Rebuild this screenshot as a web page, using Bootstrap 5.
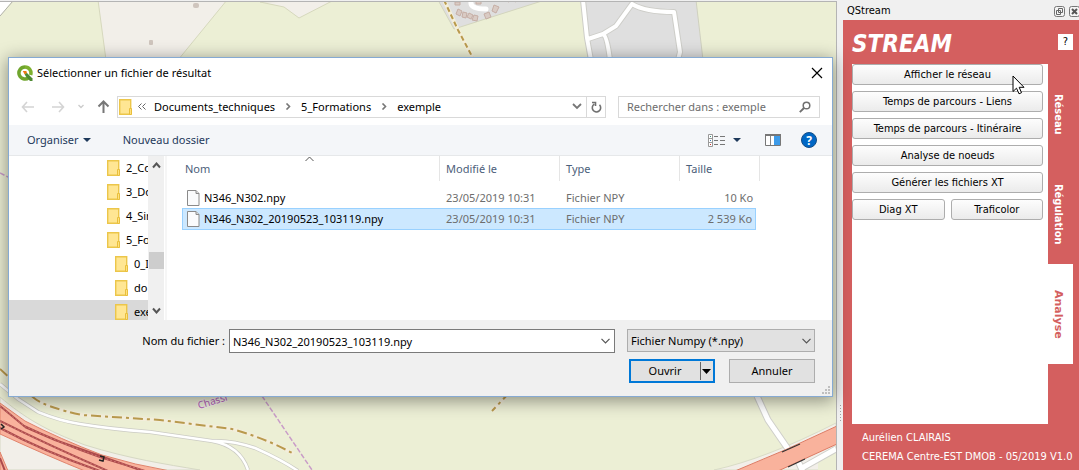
<!DOCTYPE html>
<html lang="fr">
<head>
<meta charset="utf-8">
<meta name="viewport" content="width=device-width, initial-scale=1">
<title>QStream</title>
<link rel="stylesheet" href="https://cdn.jsdelivr.net/npm/bootstrap@5.3.0/dist/css/bootstrap.min.css">
<style>
  body { font: 11px/16px "Noto Sans", "Open Sans", sans-serif; color: #000; background: #f0f0f0; }
  button, input, select { font: inherit; color: inherit; border-radius: 0; }
  svg { display: block; flex: none; }
  .rule { border: 1px solid #d9d9d9; }

  /* Map canvas */
  .map-pane { padding: 55px 3px 72px 8px; border: solid #b4b4b4; border-width: 1px 1px 0 0; margin-top: 1px; }
  .map-art { position: absolute; inset: 0; width: 100%; height: 100%; }
  .splitter { width: 6px; }

  /* File dialog */
  .file-dialog { border: 1px solid #86aad2; box-shadow: 0 3px 16px 1px rgba(0,0,0,.4); z-index: 2; }
  .title-row { height: 30px; padding: 0 9px 0 8px; }
  .nav-row { height: 37px; padding: 0 12px; }
  .step { margin-left: 13px; }
  .path-box { height: 22px; margin-left: 7px; padding-left: 1px; }
  .path-sep { margin: 0 9px; }
  .path-box button, .plain { border: 0; background: none; padding: 0; }
  .path-box .reload { border-left: 1px solid #d9d9d9; width: 19px; height: 20px; }
  .search-box { width: 202px; height: 22px; }
  .search-box input::placeholder { color: #6d6d6d; opacity: 1; }
  .tool-row { height: 31px; background: #f4f6f9; border-bottom: 1px solid #e6e8ea; color: #1e395b; padding: 0 15px 0 18px; }
  .files-row { height: 164px; }
  .tree { width: 139px; }
  .tree a { height: 24px; color: #000; padding-left: 98px; gap: 6px; white-space: nowrap; }
  .tree a.sub { padding-left: 106px; }
  .tree a.current { background: #d9d9d9; }
  .scroller { width: 16px; background: #f0f0f0; padding: 6px 0; }
  .scroller i { height: 17px; width: 15px; background: #cdcdcd; margin-top: 83px; }
  .list-pane { border-left: 2px solid #f6f6f6; padding: 0 72px 0 15px; margin-left: 1px; }
  .file-table { border-collapse: separate; border-spacing: 0; table-layout: fixed; }
  .file-table th { height: 31px; line-height: 26px; vertical-align: top; font-weight: 400; color: #4c607a; padding: 0 6px;
    background: linear-gradient(#e5e5e5,#e5e5e5) right top / 1px 25px no-repeat; }
  .file-table th:first-child { padding-left: 3px; }
  .file-table th.size-head { background: none; }
  .file-table td { height: 21px; padding: 0 6px; color: #6d6d6d; }
  .file-table td:first-child { color: #000; padding-left: 5px; }
  .file-table td.size-cell { padding-right: 3px; }
  .file-table .picked td { height: 22px; background: #cce8ff; border: solid #99d1ff; border-width: 1px 0; }
  .file-table .picked td:first-child { border-left-width: 1px; padding-left: 4px; }
  .file-table .picked td.size-cell { border-right-width: 1px; }
  .file-table td.blank, .file-table .picked td.blank { background: none; border: 0; padding: 0; }
  .sort-mark { position: absolute; top: 0; left: 122px; }
  .dialog-foot { height: 76px; background: #f0f0f0; padding: 9px 17px 0 12px; }
  .name-label { width: 204px; }
  .name-box { height: 24px; border: 1px solid #7a7a7a; }
  .name-box input { padding: 1px 0 0 3px; }
  .kind { width: 188px; height: 23px; border: 1px solid #adadad; background: #e1e1e1; padding: 0 3px; appearance: none; }
  .actions { gap: 14px; margin-top: 6px; }
  .act { width: 86px; height: 24px; border: 1px solid #adadad; background: #e1e1e1; padding: 0; }
  .act-main { border: 2px solid #0078d7; }
  .grip { position: absolute; right: 2px; bottom: 2px; }

  /* QStream dock */
  .dock { width: 236px; background: #d45f5f; font: 11px/16px "DejaVu Sans Condensed", "DejaVu Sans", sans-serif; }
  .dock-title { height: 20px; background: #f0f0f0; padding: 2px 0 0 4px; }
  .dock-head { height: 44px; padding: 0 6px 0 9px; }
  .brand { font: italic 700 24px/28px "DejaVu Sans Condensed", "DejaVu Sans", sans-serif; color: #fff; }
  .help { width: 15px; height: 16px; border: 0; background: #fff; padding: 0; line-height: 16px; }
  .dock-page { background: #fff; padding: 0 5px 0 0; margin-left: 9px; min-height: 360px; }
  .dock-page, .tool-pair { gap: 6px; }
  .tool-btn { height: 21px; border: 1px solid #adadad; border-radius: 3px; background: linear-gradient(#fdfdfd,#ebebeb); padding: 0; line-height: 19px; }
  .dock-tabs { width: 25px; margin-right: 6px; }
  .dock-tabs button { height: 100px; border: 0; padding: 0 4px 0 0; background: none; color: #fff; writing-mode: vertical-rl; line-height: 21px;
    font-family: "DejaVu Sans", sans-serif; font-weight: 700; }
  .dock-tabs button:not(.active) { font-family: "DejaVu Sans Condensed", sans-serif; }
  .dock-tabs button.active { background: #fff; color: #d45f5f; }
  .dock-foot { height: 46px; color: #fff; padding: 4px 0 0 19px; line-height: 19px; white-space: nowrap; }
  .cursor { position: absolute; right: 23px; top: 11px; pointer-events: none; }
</style>
</head>
<body>
<div class="d-flex min-vh-100">
  <main class="map-pane position-relative flex-grow-1">
    <svg class="map-art" viewBox="0 2 836 468" preserveAspectRatio="xMidYMid slice" aria-hidden="true">
      <rect y="0" width="836" height="470" fill="#ecefd5"/>
      <path d="M0 0H13L0 16Z" fill="#fff"/><path d="M13 1L0 16" stroke="#b0b0a8" fill="none"/>
      <path d="M98 0L106 60H178L227 0ZM260 2L284 7L299 18L334 0Z" fill="#f2efe9" stroke="#d6d8bd"/>
      <rect x="193" y="3" width="6" height="5" rx="2" fill="#cfc5bd"/><rect x="149" y="40" width="4" height="5" rx="1" fill="#cfc5bd"/>
      <path d="M438 0L454 29L545 0Z" fill="#dfdfdf" stroke="#d3d5bd"/>
      <path d="M455 2h5v3h-5zM458 9l4 2-2 5-4-2zM463 12l4 1-1 5-4-1zM469 13l4 2-2 4-4-2zM474 15l4 1-1 5-5-1zM484 14l5-2 2 5-5 2zM494 5l5 2-3 6-4-2zM476 0h5v4h-5zM504 0l5 2M512 0l4 2" fill="#d9cbc4" stroke="#c6aea5"/>
      <path d="M471 2Q470 9 486 9" fill="none" stroke="#fff" stroke-width="5" stroke-linecap="round"/>
      <path d="M444 0L458 30L474 60" fill="none" stroke="#f4efda" stroke-width="4"/><path d="M444 0L458 30L474 60" fill="none" stroke="#b99a4d" stroke-width="2" stroke-dasharray="5 3"/>
      <path d="M583 0H696L703 60H588Z" fill="#dfdfdf" stroke="#cfd0bf"/>
      <g fill="none" stroke-linejoin="round"><path d="M583 0L587 38L591 60M588 39L603 34L616 26L632 4Q645 12 674 12L680 52L678 60M603 34Q607 36 610 60" stroke="#cdcdc8" stroke-width="6"/>
      <path d="M583 0L587 38L591 60M588 39L603 34L616 26L632 4Q645 12 674 12L680 52L678 60M603 34Q607 36 610 60" stroke="#fff" stroke-width="4"/></g>
      <path d="M0 173L12 179M262 396L312 470" stroke="#c99cc8" stroke-width="1.5" stroke-dasharray="5 2" fill="none"/>
      <path d="M0 397C25 418 45 430 85 445C130 459 165 464 200 470H0Z" fill="#f2efe9" stroke="#d6d8c4"/>
      <path d="M0 384L18 399L38 412Q60 421 80 424Q110 429 150 432L212 441Q240 446 248 470M212 441Q232 440 255 448Q282 460 298 471" fill="none" stroke="#cbcbc4" stroke-width="4"/>
      <path d="M0 384L18 399L38 412Q60 421 80 424Q110 429 150 432L212 441Q240 446 248 470M212 441Q232 440 255 448Q282 460 298 471" fill="none" stroke="#fff" stroke-width="2.5"/>
      <path d="M0 369L14 382L34 398Q45 407 82 415L160 420L232 429Q265 438 294 454M510 392L492 411" fill="none" stroke="#f3eedb" stroke-width="4"/>
      <path d="M0 369L14 382L34 398Q45 407 82 415L160 420L232 429Q265 438 294 454M510 392L492 411" fill="none" stroke="#b99a4d" stroke-width="2" stroke-dasharray="10 4 3 4"/>
      <path d="M0 403L25 421Q60 439 102 455Q135 465 170 471H85Q50 457 0 434ZM0 452L8 471H0Z" fill="#f9b29c" stroke="#e0836c"/>
      <g fill="none" stroke="#ad4a4c" stroke-width="2"><path d="M0 406L24 426Q60 443 100 457L145 471M0 421Q50 446 108 471M0 428Q45 452 100 471M25 427L55 440L140 470M0 458L5 471"/></g>
      <g fill="none" stroke="#d98a80" stroke-width=".7" stroke-dasharray="2 2"><path d="M0 406L24 426Q60 443 100 457L145 471M0 421Q50 446 108 471M0 428Q45 452 100 471"/></g>
      <path d="M100 456L104 457L103 461L99 460M1 424l3 3-3 2" stroke="#222" stroke-width="1.500" fill="none"/>
      <path d="M714 470Q765 459 836 423V470Z" fill="#f2efe9" stroke="#d9dcc6"/>
      <path d="M818 470V459L836 452V470Z" fill="#ecefd5"/>
      <path d="M757 396L768 420L788 449M798 461L803 472M802 468L836 449" fill="none" stroke="#cfcfca" stroke-width="7"/>
      <path d="M757 396L768 420L788 449M798 461L803 472M802 468L836 449" fill="none" stroke="#fff" stroke-width="5"/>
      <path d="M735 471Q785 451 837 426V444L778 471Z" fill="#f9b29c" stroke="#dd7b64"/>
      <path d="M782 452L800 444M788 467L805 459" stroke="#333" stroke-width="1.2"/>
      <text x="199" y="409" transform="rotate(-17 199 409)" font-family="Noto Sans" font-size="10" fill="#b25fb8" stroke="#f4f0e6" stroke-width="2" paint-order="stroke">Chassi</text>
    </svg>

    <section class="file-dialog position-relative bg-white" role="dialog" aria-labelledby="dlgTitle">
      <header class="title-row d-flex align-items-center">
        <svg width="16" height="16" viewBox="0 0 16 16"><path d="M8 2a6 6 0 1 0 3.800 10.600" fill="none" stroke="#6fa52d" stroke-width="3.500"/><path d="M8 2a6 6 0 0 1 5.600 8" fill="none" stroke="#7eb02f" stroke-width="3.500"/><path d="M7.500 8.500L10 8l5.500 5.500V16h-2.500L8.500 11Z" fill="#4f8a34"/><path d="M5.800 6h3.500l.7 1.700L7.700 9.500z" fill="#ee7913"/></svg>
        <span id="dlgTitle" class="ms-1 flex-grow-1">Sélectionner un fichier de résultat</span>
        <button class="plain" type="button" aria-label="Fermer"><svg width="12" height="12" viewBox="0 0 12 12"><path d="M1 1l10 10M11 1L1 11" stroke="#000" stroke-width="1.200"/></svg></button>
      </header>

      <div class="nav-row d-flex align-items-center">
        <button class="plain" type="button" aria-label="Précédent"><svg width="14" height="12" viewBox="0 0 14 12"><path d="M6 1L1.500 6L6 11M2 6h11" fill="none" stroke="#d4d4d4" stroke-width="1.600"/></svg></button>
        <button class="plain ms-3" type="button" aria-label="Suivant"><svg width="14" height="12" viewBox="0 0 14 12"><path d="M8 1l4.500 5L8 11M12 6H1" fill="none" stroke="#d4d4d4" stroke-width="1.600"/></svg></button>
        <button class="plain step" type="button" aria-label="Récents"><svg width="6" height="5" viewBox="0 0 6 5"><path d="M.5 1L3 3.500L5.500 1" fill="none" stroke="#ccc" stroke-width="1.400"/></svg></button>
        <button class="plain step" type="button" aria-label="Dossier parent"><svg width="13" height="13" viewBox="0 0 13 13"><path d="M1.500 6.500l5-5l5 5M6.500 2v11" fill="none" stroke="#777" stroke-width="2"/></svg></button>
        <div class="path-box rule d-flex align-items-center flex-grow-1 me-2 ">
          <svg width="13" height="16" viewBox="0 0 13 16"><use href="#folder"/></svg>
          <svg class="ms-1 me-2" width="10" height="7" viewBox="0 0 10 7"><path d="M5.500.5l-3 3l3 3M9.500.5l-3 3l3 3" fill="none" stroke="#666"/></svg>
          <span>Documents_techniques</span>
          <svg class="path-sep" width="8" height="7" viewBox="0 0 8 7"><path d="M2.500.5l3 3l-3 3" fill="none" stroke="#777" stroke-width="1.600"/></svg>
          <span>5_Formations</span>
          <svg class="path-sep" width="8" height="7" viewBox="0 0 8 7"><path d="M2.500.5l3 3l-3 3" fill="none" stroke="#777" stroke-width="1.600"/></svg>
          <span class="flex-grow-1">exemple</span>
          <button class="me-1" type="button" aria-label="Historique"><svg width="10" height="7" viewBox="0 0 10 7"><path d="M1 1l4 4l4-4" fill="none" stroke="#777" stroke-width="1.800"/></svg></button>
          <button class="reload d-flex align-items-center justify-content-center" type="button" aria-label="Actualiser"><svg width="11" height="12" viewBox="0 0 11 12"><path d="M3.200 3.200A4.200 4.200 0 1 0 8.500 3.800M1 1.500h3.500V5" fill="none" stroke="#707070" stroke-width="1.600"/></svg></button>
        </div>
        <div class="search-box rule d-flex align-items-center ms-1 ps-2 pe-2">
          <input class="plain flex-grow-1 w-100" type="search" placeholder="Rechercher dans : exemple" aria-label="Rechercher dans : exemple">
          <svg width="12" height="12" viewBox="0 0 12 12"><circle cx="7.500" cy="4.500" r="3.300" fill="none" stroke="#707070" stroke-width="1.500"/><path d="M5 7L.8 11.200" stroke="#707070" stroke-width="1.900"/></svg>
        </div>
      </div>

      <div class="tool-row d-flex align-items-center">
        <button class="plain d-flex align-items-center gap-1" type="button">Organiser <svg width="8" height="4" viewBox="0 0 8 4"><path d="M0 0h8L4 4z" fill="#1e395b"/></svg></button>
        <button class="plain ms-4 ps-2" type="button">Nouveau dossier</button>
        <button class="plain ms-auto d-flex align-items-center" type="button" aria-label="Affichage">
          <svg width="17" height="13" viewBox="0 0 17 13"><path d="M.5.500h4v12h-4zM.5 4.500h4M.5 8.500h4" fill="#fff" stroke="#999"/><path d="M6 2.500h4m2 0h5M6 6.500h4m2 0h5M6 10.500h4m2 0h5" stroke="#777"/><path d="M2 2h1v1H2z" fill="#388e7c"/><path d="M2 6h1v1H2z" fill="#3778b8"/><path d="M2 10h1v1H2z" fill="#c33"/></svg>
          <svg class="ms-2" width="8" height="4" viewBox="0 0 8 4"><path d="M0 0h8L4 4z" fill="#1e395b"/></svg></button>
        <button class="plain ms-4" type="button" aria-label="Volet de visualisation"><svg width="16" height="12" viewBox="0 0 16 12"><path d="M.5.500h15v11H.5z" fill="#fff" stroke="#777"/><path d="M0 1h16" stroke="#777" stroke-width="2"/><path d="M5.500 2v9" stroke="#888"/><path d="M9 2h6v9H9z" fill="#3d9be9"/></svg></button>
        <button class="plain ms-3 ps-1" type="button" aria-label="Aide"><svg width="16" height="16" viewBox="0 0 16 16"><circle cx="8" cy="8" r="7.500" fill="#0067c5" stroke="#134c86"/><text x="8" y="12.500" text-anchor="middle" font-size="12" font-weight="700" fill="#fff">?</text></svg></button>
      </div>

      <div class="files-row d-flex">
        <nav class="tree flex-shrink-0 overflow-hidden" aria-label="Dossiers">
          <a href="#" class="d-flex align-items-center text-decoration-none"><svg width="13" height="16" viewBox="0 0 13 16"><g id="folder"><path d="M.7.700h11v14.600H.7z" fill="#ffe693" stroke="#ecc64a" stroke-width="1.400"/><path d="M10.500 9.500h2v6h-2z" fill="#ffe17e" stroke="#e9bf3c"/></g></svg>2_Co</a>
          <a href="#" class="d-flex align-items-center text-decoration-none"><svg width="13" height="16" viewBox="0 0 13 16"><use href="#folder"/></svg>3_Do</a>
          <a href="#" class="d-flex align-items-center text-decoration-none"><svg width="13" height="16" viewBox="0 0 13 16"><use href="#folder"/></svg>4_Sin</a>
          <a href="#" class="d-flex align-items-center text-decoration-none"><svg width="13" height="16" viewBox="0 0 13 16"><use href="#folder"/></svg>5_Fo</a>
          <a href="#" class="sub d-flex align-items-center text-decoration-none"><svg width="13" height="16" viewBox="0 0 13 16"><use href="#folder"/></svg>0_I</a>
          <a href="#" class="sub d-flex align-items-center text-decoration-none"><svg width="13" height="16" viewBox="0 0 13 16"><use href="#folder"/></svg>do</a>
          <a href="#" class="sub current d-flex align-items-center text-decoration-none"><svg width="13" height="16" viewBox="0 0 13 16"><use href="#folder"/></svg>exe</a>
        </nav>
        <div class="scroller flex-shrink-0 d-flex flex-column align-items-center">
          <svg width="9" height="7" viewBox="0 0 9 7"><path d="M1 5.500l3.500-4l3.500 4" fill="none" stroke="#555" stroke-width="2"/></svg>
          <i></i>
          <svg class="mt-auto" width="9" height="7" viewBox="0 0 9 7"><path d="M1 1.500l3.500 4l3.500-4" fill="none" stroke="#555" stroke-width="2"/></svg>
        </div>
        <div class="list-pane flex-grow-1">
          <table class="file-table w-100">
            <colgroup><col><col width="120"><col width="120"><col width="76"><col width="4"></colgroup>
            <thead><tr>
              <th class="position-relative">Nom<svg class="sort-mark" width="11" height="6" viewBox="0 0 11 6"><path d="M1.500 5L5.500 1l4 4" fill="none" stroke="#555"/></svg></th>
              <th>Modifié le</th><th>Type</th><th class="size-head">Taille</th><th class="p-0"></th>
            </tr></thead>
            <tbody>
              <tr><td><span class="d-flex align-items-center gap-1"><svg width="13" height="16" viewBox="0 0 13 16"><g id="page"><path d="M.5.500h8.500l3 3v12H.5z" fill="#fafbfc" stroke="#8a8a8a"/><path d="M9 .5v3h3" fill="#ddd" stroke="#8a8a8a"/></g></svg>N346_N302.npy</span></td><td>23/05/2019 10:31</td><td>Fichier NPY</td><td class="size-cell text-end">10 Ko</td><td class="blank"></td></tr>
              <tr class="picked"><td><span class="d-flex align-items-center gap-1"><svg width="13" height="16" viewBox="0 0 13 16"><use href="#page"/></svg>N346_N302_20190523_103119.npy</span></td><td>23/05/2019 10:31</td><td>Fichier NPY</td><td class="size-cell text-end">2 539 Ko</td><td class="blank"></td></tr>
            </tbody>
          </table>
        </div>
      </div>

      <form class="dialog-foot position-relative" onsubmit="return false">
        <div class="d-flex align-items-start">
          <label for="fname" class="name-label flex-shrink-0 pt-1 text-end me-1">Nom du fichier :</label>
          <div class="name-box bg-white d-flex align-items-center flex-grow-1">
            <input id="fname" class="plain flex-grow-1" type="text" value="N346_N302_20190523_103119.npy">
            <button class="plain me-1" type="button" aria-label="Noms récents"><svg width="9" height="6" viewBox="0 0 9 6"><path d="M.5.800l4 4l4-4" fill="none" stroke="#555" stroke-width="1.200"/></svg></button>
          </div>
          <div class="position-relative ms-2 ps-1">
            <select class="kind" aria-label="Type de fichier"><option>Fichier Numpy (*.npy)</option></select>
            <svg class="position-absolute top-50 end-0 translate-middle-y me-1 pe-none" width="9" height="6" viewBox="0 0 9 6"><path d="M.5.800l4 4l4-4" fill="none" stroke="#555" stroke-width="1.200"/></svg>
          </div>
        </div>
        <div class="actions d-flex justify-content-end">
          <button class="act act-main d-flex align-items-center" type="submit"><span class="flex-grow-1">Ouvrir</span><svg width="14" height="18" viewBox="0 0 14 18"><path d="M1.500 0v18" stroke="#666"/><path d="M3 7h9l-4.500 5z"/></svg></button>
          <button class="act" type="button">Annuler</button>
        </div>
        <svg class="grip" width="8" height="8" viewBox="0 0 8 8"><path d="M6 0h2v2H6zM3 3h2v2H3zM6 3h2v2H6zM0 6h2v2H0zM3 6h2v2H3zM6 6h2v2H6z" fill="#bfbfbf"/></svg>
      </form>
    </section>
  </main>

  <div class="splitter flex-shrink-0 d-flex flex-column justify-content-end align-items-center pb-5">
    <svg width="1" height="17" viewBox="0 0 1 17"><path d="M.5 0v17" stroke="#a0a0a0" stroke-dasharray="1 2"/></svg>
  </div>

  <aside class="dock d-flex flex-column flex-shrink-0">
    <div class="dock-title d-flex align-items-center overflow-hidden">
      <span class="flex-grow-1">QStream</span>
      <button class="plain me-1" type="button" aria-label="Détacher"><svg width="11" height="11" viewBox="0 0 11 11"><rect x=".5" y=".5" width="10" height="10" rx="2" fill="#f4f4f4" stroke="#777"/><path d="M4.500 2.500h4v4h-4zM2.500 4.500h4v4h-4z" fill="#f4f4f4" stroke="#666"/></svg></button>
      <button class="plain" type="button" aria-label="Fermer le panneau"><svg width="10" height="11" viewBox="0 0 10 11"><rect x=".5" y=".5" width="10" height="10" rx="2" fill="#f4f4f4" stroke="#777"/><path d="M3 3l5 5M8 3L3 8" stroke="#555" stroke-width="2"/></svg></button>
    </div>
    <div class="dock-head d-flex align-items-center justify-content-between">
      <span class="brand pt-1">STREAM</span>
      <button class="help" type="button">?</button>
    </div>
    <div class="d-flex flex-grow-1">
      <div class="dock-page position-relative d-flex flex-column flex-grow-1">
        <button class="tool-btn" type="button">Afficher le réseau</button>
        <button class="tool-btn" type="button">Temps de parcours - Liens</button>
        <button class="tool-btn" type="button">Temps de parcours - Itinéraire</button>
        <button class="tool-btn" type="button">Analyse de noeuds</button>
        <button class="tool-btn" type="button">Générer les fichiers XT</button>
        <div class="tool-pair d-flex">
          <button class="tool-btn flex-fill w-50" type="button">Diag XT</button>
          <button class="tool-btn flex-fill w-50" type="button">Traficolor</button>
        </div>
        <svg class="cursor" width="13" height="20" viewBox="0 0 13 20"><path d="M1 1v15.500l3.500-3.300L7 18.800l2.500-1.100L7.200 12.300H12Z" fill="#fff" stroke="#000"/></svg>
      </div>
      <div class="dock-tabs d-flex flex-column">
        <button type="button">Réseau</button>
        <button type="button">Régulation</button>
        <button type="button" class="active">Analyse</button>
      </div>
    </div>
    <footer class="dock-foot">Aurélien CLAIRAIS<br>CEREMA Centre-EST DMOB - 05/2019 V1.0</footer>
  </aside>
</div>
<script src="https://cdn.jsdelivr.net/npm/bootstrap@5.3.0/dist/js/bootstrap.bundle.min.js"></script>
</body>
</html>
